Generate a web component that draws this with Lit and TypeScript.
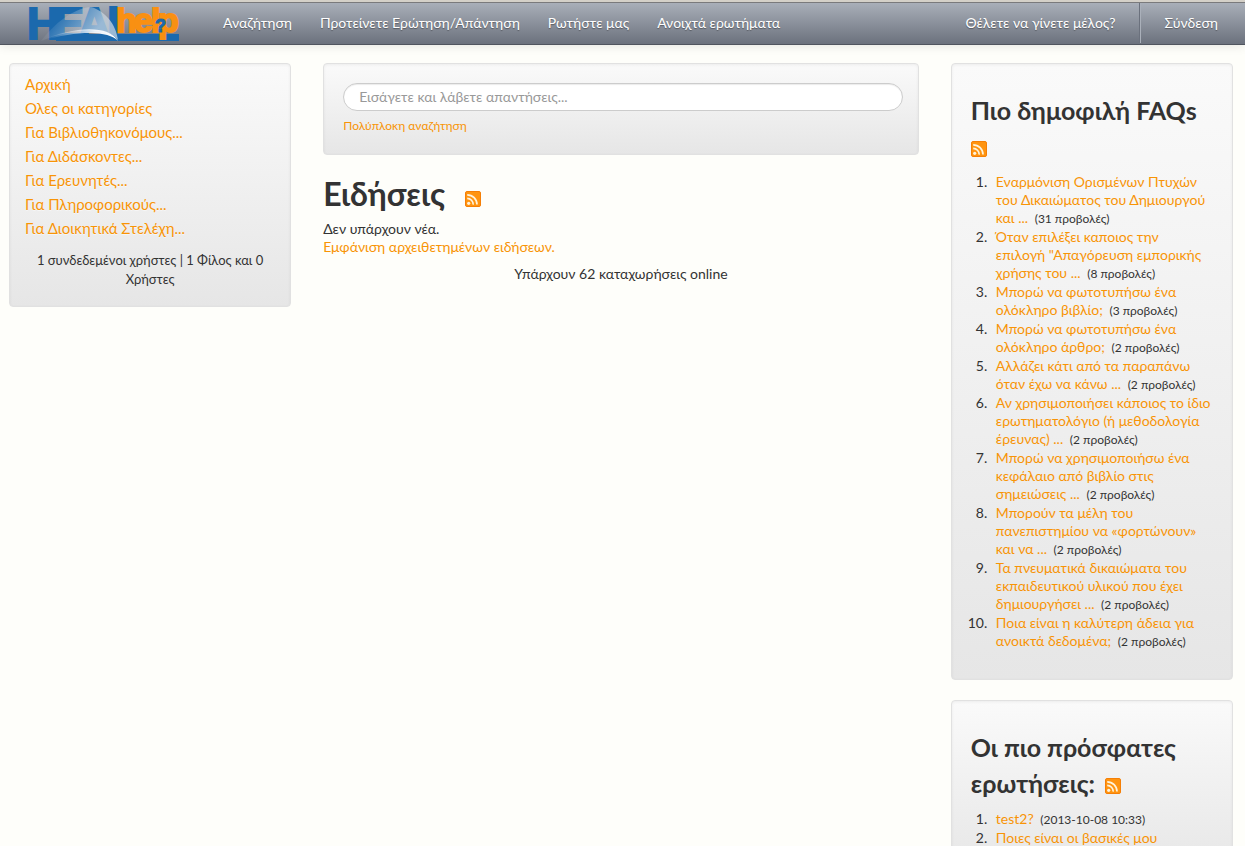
import { LitElement, html, svg, css } from "lit";
import { customElement } from "lit/decorators.js";

interface Entry {
  lines: string[];
  note?: string;
}

const NAV = ["Αναζήτηση", "Προτείνετε Ερώτηση/Απάντηση", "Ρωτήστε μας", "Ανοιχτά ερωτήματα"];

const CATEGORIES = [
  "Αρχική",
  "Ολες οι κατηγορίες",
  "Για Βιβλιοθηκονόμους...",
  "Για Διδάσκοντες...",
  "Για Ερευνητές...",
  "Για Πληροφορικούς...",
  "Για Διοικητικά Στελέχη...",
];

const POPULAR: Entry[] = [
  { lines: ["Εναρμόνιση Ορισμένων Πτυχών", "του Δικαιώματος του Δημιουργού", "και ..."], note: "(31 προβολές)" },
  { lines: ["Όταν επιλέξει καποιος την", "επιλογή \"Απαγόρευση εμπορικής", "χρήσης του ..."], note: "(8 προβολές)" },
  { lines: ["Μπορώ να φωτοτυπήσω ένα", "ολόκληρο βιβλίο;"], note: "(3 προβολές)" },
  { lines: ["Μπορώ να φωτοτυπήσω ένα", "ολόκληρο άρθρο;"], note: "(2 προβολές)" },
  { lines: ["Αλλάζει κάτι από τα παραπάνω", "όταν έχω να κάνω ..."], note: "(2 προβολές)" },
  { lines: ["Αν χρησιμοποιήσει κάποιος το ίδιο", "ερωτηματολόγιο (ή μεθοδολογία", "έρευνας) ..."], note: "(2 προβολές)" },
  { lines: ["Μπορώ να χρησιμοποιήσω ένα", "κεφάλαιο από βιβλίο στις", "σημειώσεις ..."], note: "(2 προβολές)" },
  { lines: ["Μπορούν τα μέλη του", "πανεπιστημίου να «φορτώνουν»", "και να ..."], note: "(2 προβολές)" },
  { lines: ["Τα πνευματικά δικαιώματα του", "εκπαιδευτικού υλικού που έχει", "δημιουργήσει ..."], note: "(2 προβολές)" },
  { lines: ["Ποια είναι η καλύτερη άδεια για", "ανοικτά δεδομένα;"], note: "(2 προβολές)" },
];

const RECENT: Entry[] = [
  { lines: ["test2?"], note: "(2013-10-08 10:33)" },
  { lines: ["Ποιες είναι οι βασικές μου"] },
];

@customElement("rss-link")
export class RssLink extends LitElement {
  static styles = css`
    :host { display: inline-block; width: 16px; height: 16px; line-height: 0; vertical-align: -1px; }
    a, svg { display: block; }
  `;
  render() {
    return html`<a href="#" aria-label="RSS">
      <svg width="16" height="16" viewBox="0 0 16 16">
        <rect x="0.5" y="0.5" width="15" height="15" rx="1.5" fill="#ff9410" stroke="#f57f06"></rect>
        <g fill="none" stroke="#fff3dc" stroke-width="1.7">
          <path d="M2.2 7.4a6 6 0 0 1 6 6.2"></path>
          <path d="M2.2 3.8a9.8 9.8 0 0 1 9.8 9.8"></path>
        </g>
        <circle cx="3.7" cy="12.3" r="1.6" fill="#fff3dc"></circle>
      </svg>
    </a>`;
  }
}

@customElement("site-logo")
export class SiteLogo extends LitElement {
  static styles = css`
    :host { display: block; }
    svg { display: block; overflow: visible; }
    text { font-family: "Liberation Sans", Arial, sans-serif; font-weight: 700; }
    .heal { font-size: 45px; fill: #1b69ad; stroke: #1b69ad; stroke-width: 2px; }
    .help { font-size: 34px; fill: #f99012; stroke: #f99012; stroke-width: 2px; }
    .mark { font-size: 18px; fill: #1b69ad; stroke: #1b69ad; stroke-width: 1px; }
  `;
  render() {
    return html`<svg width="151" height="38" viewBox="0 0 151 38">
      ${svg`
        <defs>
          <linearGradient id="fade" x1="0" y1="0" x2="1" y2="0.3">
            <stop offset="0.2" stop-color="#c3d4e4" stop-opacity="0"></stop>
            <stop offset="0.85" stop-color="#cfdbe6" stop-opacity="0.7"></stop>
          </linearGradient>
          <linearGradient id="arc" x1="0" y1="0" x2="1" y2="0">
            <stop offset="0.1" stop-color="#ffffff" stop-opacity="0"></stop>
            <stop offset="0.7" stop-color="#ffffff" stop-opacity="0.9"></stop>
            <stop offset="1" stop-color="#ffffff"></stop>
          </linearGradient>
        </defs>
        <text class="heal" y="33" x="-2 25 49 78">HEAl</text>
        <rect x="27" y="28" width="123" height="7" fill="#1b69ad"></rect>
        <path d="M12 35C30 12 48 2 62 1C76 5 87 18 89 34C78 20 45 22 12 35Z" fill="url(#fade)"></path>
        <path d="M12 35C45 20 80 19 89 35C80 25 50 24 12 35Z" fill="url(#arc)"></path>
        <text class="help" y="26" x="87 105 122 129">help</text>
        <text class="mark" y="26" x="126">?</text>
      `}
    </svg>`;
  }
}

@customElement("app-root")
export class AppRoot extends LitElement {
  static styles = css`
    :host {
      display: block;
      min-height: 100vh;
      background: #fefefa;
      color: #333;
      font: 14px/18px Lato, "Open Sans", sans-serif;
    }
    a { color: #f89406; text-decoration: none; }
    ul, ol { margin: 0; padding: 0; }
    ul { list-style: none; }
    p { margin: 0; }

    .navbar {
      display: flex;
      align-items: stretch;
      box-sizing: border-box;
      height: 45px;
      padding: 0 13px 0 29px;
      border-top: 2px solid #d4d0c8;
      border-bottom: 1px solid #50555f;
      background: linear-gradient(#aab0ba, #6b717d);
      box-shadow: inset 0 1px 0 #7a7a7c, 0 1px 10px rgba(0, 0, 0, 0.1);
    }
    .brand { width: 180px; padding-top: 4px; }
    .menu { display: flex; flex: 1; }
    .navbar .item {
      display: block;
      padding: 12px 14px;
      color: #fff;
      text-shadow: 0 1px 1px rgba(0, 0, 0, 0.35);
      white-space: nowrap;
    }
    .account { display: flex; }
    .divider {
      box-sizing: border-box;
      width: 2px;
      margin: 1px 10px 1px 9px;
      border-left: 1px solid #6b717d;
      border-right: 1px solid #aab0ba;
    }

    .page {
      display: grid;
      grid-template-columns: 9fr 19fr 9fr;
      column-gap: 32px;
      align-items: start;
      padding: 18px 12px 0 9px;
    }
    .column { display: flex; flex-direction: column; gap: 20px; min-width: 0; }
    .well {
      padding: 19px;
      border: 1px solid #e1e1e1;
      border-radius: 4px;
      background: linear-gradient(#fafafa, #e6e6e6);
      box-shadow: inset 0 1px 3px rgba(0, 0, 0, 0.06);
    }
    .side { padding: 8px 15px 17px; }
    .categories { font-size: 15px; line-height: 24px; text-shadow: 0 1px 0 rgba(255, 255, 255, 0.5); }
    .users { margin-top: 11px; padding: 0 9px; font-size: 13px; line-height: 19px; text-align: center; }

    .search { padding-right: 15px; }
    .query {
      display: block;
      box-sizing: border-box;
      width: 100%;
      height: 28px;
      padding: 3px 15px 5px;
      border: 1px solid #ccc;
      border-radius: 14px;
      outline: 0;
      background: #fff;
      box-shadow: inset 0 1px 1px rgba(0, 0, 0, 0.08);
      font: inherit;
      color: #555;
    }
    .query::placeholder { color: #999; opacity: 1; }
    .advanced { margin-top: 6px; font-size: 12px; }

    h1, h3 { margin: 0; font-weight: 700; line-height: 36px; }
    h1 { font-size: 32px; margin: 1px 0 8px; }
    h1 rss-link { margin-left: 12px; }
    h3 { font-size: 25px; margin: 9px 0; }
    h3 rss-link { margin-left: 4px; }
    .own-line { display: block; height: 36px; }
    .own-line rss-link { margin-left: 0; }
    .online { margin-top: 9px; text-align: center; }

    .entries { padding-left: 20px; margin-bottom: 9px; }
    .entries li { padding: 0 0 1px 5px; white-space: nowrap; }
    small { margin-left: 3px; font-size: 12px; line-height: 1; }
  `;

  private entries(list: Entry[]) {
    return html`<ol class="entries">
      ${list.map(
        (e) => html`<li><a href="#">${e.lines.map((l, i) => (i ? html`<br />${l}` : l))}</a>
          ${e.note ? html`<small>${e.note}</small>` : ""}</li>`,
      )}
    </ol>`;
  }

  render() {
    return html`
      <nav class="navbar">
        <a class="brand" href="#" aria-label="Αρχική"><site-logo></site-logo></a>
        <ul class="menu">
          ${NAV.map((n) => html`<li><a class="item" href="#">${n}</a></li>`)}
        </ul>
        <ul class="account">
          <li><a class="item" href="#">Θέλετε να γίνετε μέλος?</a></li>
          <li class="divider" role="separator"></li>
          <li><a class="item" href="#">Σύνδεση</a></li>
        </ul>
      </nav>
      <div class="page">
        <aside class="column">
          <div class="well side">
            <ul class="categories">
              ${CATEGORIES.map((c) => html`<li><a href="#">${c}</a></li>`)}
            </ul>
            <p class="users">1 συνδεδεμένοι χρήστες | 1 Φίλος και 0 Χρήστες</p>
          </div>
        </aside>
        <main class="column">
          <form class="well search">
            <input class="query" type="search" aria-label="Αναζήτηση" placeholder="Εισάγετε και λάβετε απαντήσεις..." />
            <p class="advanced"><a href="#">Πολύπλοκη αναζήτηση</a></p>
          </form>
          <section>
            <h1>Ειδήσεις <rss-link></rss-link></h1>
            <p>Δεν υπάρχουν νέα.</p>
            <p><a href="#">Εμφάνιση αρχειθετημένων ειδήσεων.</a></p>
            <p class="online">Υπάρχουν 62 καταχωρήσεις online</p>
          </section>
        </main>
        <aside class="column">
          <section class="well">
            <h3>Πιο δημοφιλή FAQs <span class="own-line"><rss-link></rss-link></span></h3>
            ${this.entries(POPULAR)}
          </section>
          <section class="well">
            <h3>Οι πιο πρόσφατες ερωτήσεις: <rss-link></rss-link></h3>
            ${this.entries(RECENT)}
          </section>
        </aside>
      </div>
    `;
  }
}
